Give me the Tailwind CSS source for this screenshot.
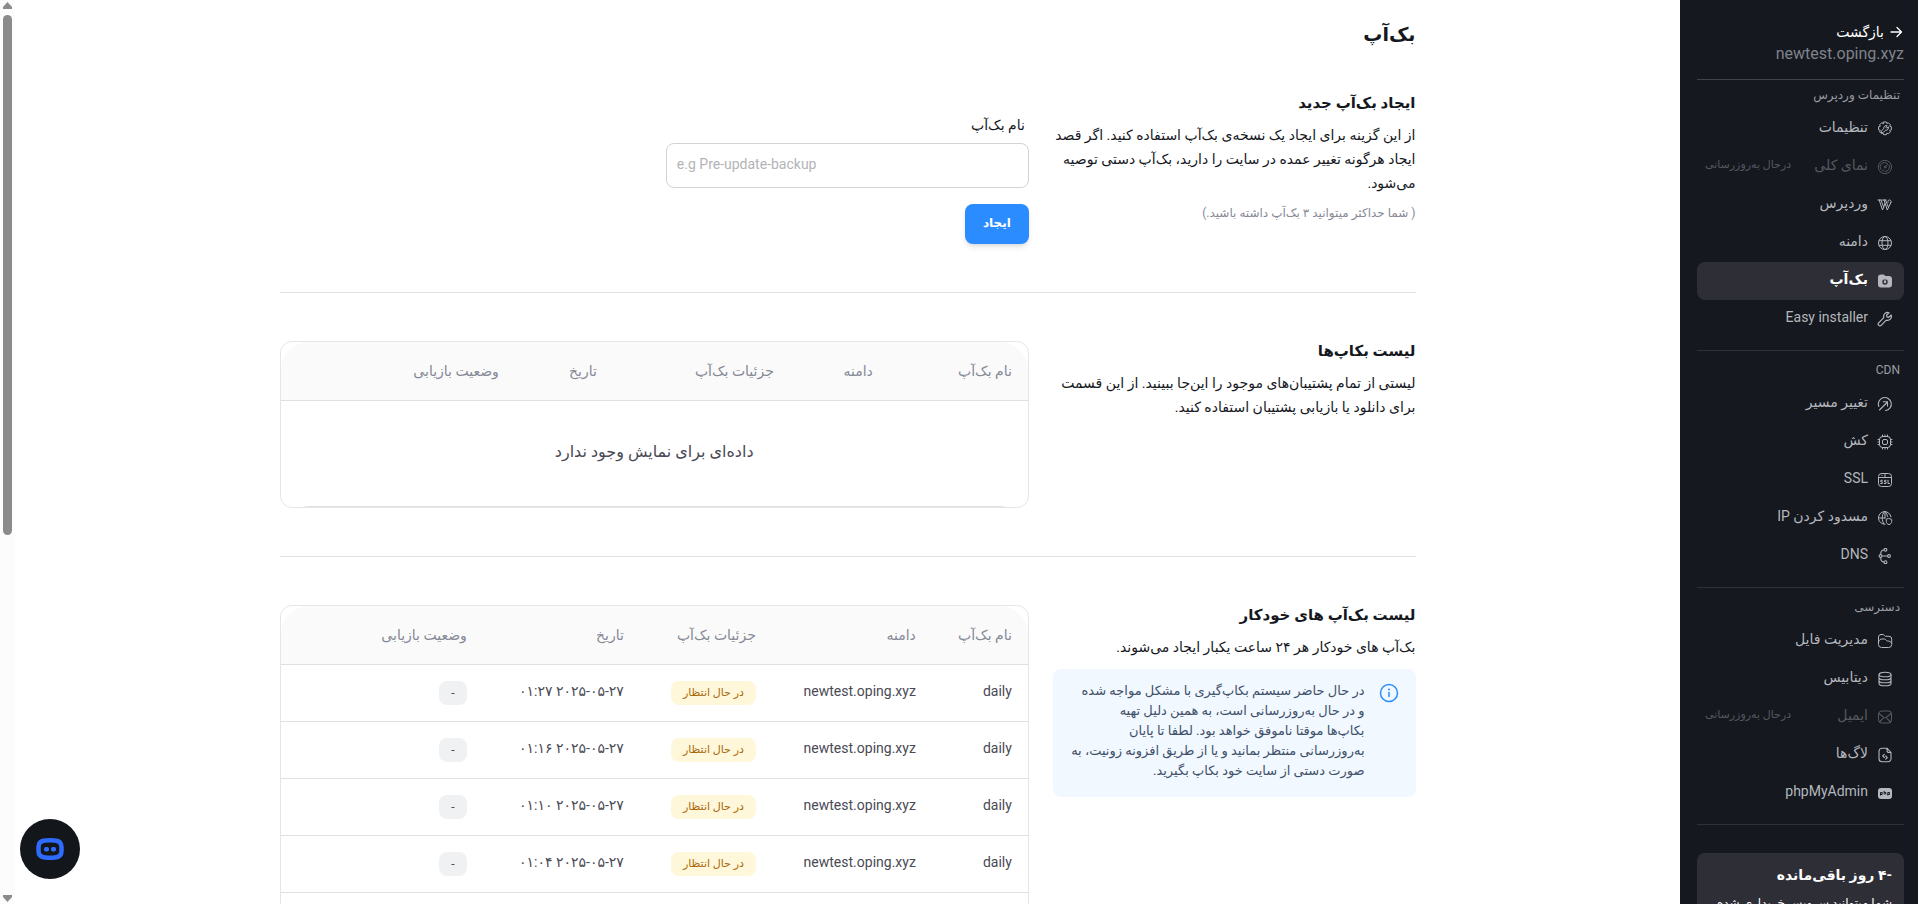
<!DOCTYPE html>
<html lang="fa" dir="rtl">
<head>
    <meta charset="UTF-8">
    <title>بک‌آپ</title>
    <meta name="viewport" content="width=device-width, initial-scale=1.0">
    <script src="https://cdn.jsdelivr.net/npm/@tailwindcss/browser@4"></script>
</head>
<body class="bg-white font-[Roboto,'DejaVu_Sans',sans-serif] text-[#15181e]">

<div class="flex h-screen overflow-hidden">

    <!-- sidebar -->
    <aside class="w-[238px] shrink-0 overflow-hidden bg-[#15181e] pr-[14px] pl-[17px] text-[#b4b7bd]">
        <div class="h-20 border-b border-[#3f4249] pt-5">
            <a href="#" class="flex h-6 items-center gap-1 text-sm font-medium text-white">
                <svg class="size-4" viewBox="0 0 16 16" fill="none" stroke="currentColor" stroke-width="1.3" stroke-linecap="round" stroke-linejoin="round"><path d="M3 8h10.5M9 3.5 13.5 8 9 12.5"/></svg>
                بازگشت
            </a>
            <p class="text-right text-base leading-5 text-[#7f838b]" dir="ltr">newtest.oping.xyz</p>
        </div>

        <nav>
            <h3 class="flex h-[30px] items-center pr-1 text-xs text-[#9a9da4]">تنظیمات وردپرس</h3>
            <ul class="text-sm [&_a]:pb-1 [&_svg]:mt-1">
                <li><a href="#" class="flex h-[38px] items-center gap-[9px] pr-[11px] pl-2">
                    <svg class="size-4" viewBox="0 0 16 16" fill="none" stroke="currentColor" stroke-linecap="round" stroke-linejoin="round"><path d="M6.600 1h2.800l.5 1.500 1.500-.7 2 2-.7 1.400 1.700.6v3l-1.700.5.7 1.500-2 2-1.500-.7-.5 1.600H6.600l-.5-1.600-1.500.7-2-2 .7-1.500-1.700-.5v-3l1.700-.6-.7-1.400 2-2 1.500.7z"/><path d="M4.600 11.400a1.200 1.200 0 0 1 0-1.700L6.800 7.500A2.500 2.500 0 0 1 10.100 4.700L8.800 6.200l1 1 1.500-1.400A2.500 2.500 0 0 1 8.500 9.200L6.300 11.400a1.200 1.200 0 0 1-1.700 0z"/></svg>
                    تنظیمات</a></li>
                <li><a href="#" class="flex h-[38px] items-center gap-[9px] pr-[11px] pl-2 text-[#55585e]">
                    <svg class="size-4" viewBox="0 0 16 16" fill="none" stroke="currentColor" stroke-linecap="round"><circle cx="8" cy="8" r="6.700"/><path d="M3.800 10.300a4.500 4.500 0 0 1 6.500-6M12.200 6a4.500 4.500 0 0 1-4 6.500M8.500 7.500l2-2M5.200 12l1.500-1"/><circle cx="8" cy="8" r="1"/></svg>
                    <span class="grow">نمای کلی</span><span class="text-[11px]">درحال به‌روزرسانی</span></a></li>
                <li><a href="#" class="flex h-[38px] items-center gap-[9px] pr-[11px] pl-2">
                    <svg class="size-4" viewBox="0 0 16 16" fill="none" stroke="currentColor" stroke-linecap="round" stroke-linejoin="round"><path d="M1 3h3M5.500 3h3.500M2.200 3l3.300 10L8 6.500M4 3l2.600 7M7 3l3.300 10 3.500-7.500M8.500 3l2.800 7M11 5.500c-1-2.500 2-3.500 3-1.500.500 1.200-.2 2-.8 3"/></svg>
                    وردپرس</a></li>
                <li><a href="#" class="flex h-[38px] items-center gap-[9px] pr-[11px] pl-2">
                    <svg class="size-4" viewBox="0 0 16 16" fill="none" stroke="currentColor"><circle cx="8" cy="8" r="6.500"/><ellipse cx="8" cy="8" rx="3" ry="6.500"/><path d="M2 5.700h12M2 10.300h12"/></svg>
                    دامنه</a></li>
                <li><a href="#" class="flex h-[38px] items-center gap-[9px] rounded-lg bg-[#2e2e37] pr-[11px] pl-2 font-bold text-white">
                    <svg class="size-4 text-[#b4b7bd]" viewBox="0 0 16 16" fill="none"><path fill="currentColor" d="M4 1.500h2.500c1 0 1.300 1.500 2.300 1.500H12a3 3 0 0 1 3 3v5.500a3 3 0 0 1-3 3H4a3 3 0 0 1-3-3v-7a3 3 0 0 1 3-3z"/><circle cx="8" cy="9" r="2" stroke="#2e2e37" stroke-width="1.400"/><path d="M8 6.500v2" stroke="#b4b7bd"/></svg>
                    بک‌آپ</a></li>
                <li><a href="#" class="flex h-[38px] items-center gap-[9px] pr-[11px] pl-2">
                    <svg class="size-4" viewBox="0 0 16 16" fill="none" stroke="currentColor" stroke-width="1.200" stroke-linecap="round" stroke-linejoin="round"><path d="M12 1.700a4 4 0 0 0-5.200 5L1.700 11.800a1.700 1.700 0 0 0 2.500 2.500l5-5.100a4 4 0 0 0 5-5.200L11.800 6.300 9.900 5.900 9.600 4z"/></svg>
                    Easy installer</a></li>
            </ul>

            <h3 class="mt-3 flex h-[35px] items-center border-t border-[#2f3138] pt-1 pr-1 text-xs text-[#9a9da4]">CDN</h3>
            <ul class="text-sm [&_a]:pb-1 [&_svg]:mt-1">
                <li><a href="#" class="flex h-[38px] items-center gap-[9px] pr-[11px] pl-2">
                    <svg class="size-4" viewBox="0 0 16 16" fill="none" stroke="currentColor" stroke-width="1.100" stroke-linecap="round" stroke-linejoin="round"><path d="M1.800 10.500A6.500 6.500 0 1 1 8.500 14.500M2.500 14l7.500-7.500M6.200 5.800h4.300v4.300"/></svg>
                    تغییر مسیر</a></li>
                <li><a href="#" class="flex h-[38px] items-center gap-[9px] pr-[11px] pl-2">
                    <svg class="size-4" viewBox="0 0 16 16" fill="none" stroke="currentColor" stroke-linecap="round"><rect x="2.500" y="2.500" width="11" height="11" rx="3"/><rect x="5.500" y="5.500" width="5" height="5" rx="1.500"/><path d="M5.500 2.500V1M8 2.500V1M10.500 2.500V1M5.500 15v-1.500M8 15v-1.500M10.500 15v-1.500M1 5.500h1.500M1 8h1.500M1 10.500h1.500M13.500 5.500H15M13.500 8H15M13.500 10.500H15"/></svg>
                    کش</a></li>
                <li><a href="#" class="flex h-[38px] items-center gap-[9px] pr-[11px] pl-2">
                    <svg class="size-4" viewBox="0 0 16 16" fill="none" stroke="currentColor" stroke-linecap="round"><rect x="1.500" y="1.500" width="13" height="13" rx="3"/><path d="M1.500 5.500h13M5 3.500h.1M8 2v3M5.300 8.300H3.800v1.500h1.500v1.700H3.700M9 8.300H7.500v1.500H9v1.700H7.400M11 8.300v3.200h1.500"/></svg>
                    SSL</a></li>
                <li><a href="#" class="flex h-[38px] items-center gap-[9px] pr-[11px] pl-2">
                    <svg class="size-4" viewBox="0 0 16 16" fill="none" stroke="currentColor" stroke-linecap="round" stroke-linejoin="round"><path d="M14 7A6.300 6.300 0 1 0 8 14.200M7.500 1.500c-3 3.500-3 9-.500 12.500M8 1.500c1.500 1.500 2.200 3 2.400 5M1.500 8H8M8 1.500V8"/><path d="m12 8.500 2.700 1v2c0 1.600-1.200 2.600-2.700 3.200-1.500-.6-2.700-1.600-2.700-3.200v-2z"/></svg>
                    مسدود کردن IP</a></li>
                <li><a href="#" class="flex h-[38px] items-center gap-[9px] pr-[11px] pl-2">
                    <svg class="size-4" viewBox="0 0 16 16" fill="none" stroke="currentColor" stroke-width="1.100"><circle cx="8.500" cy="1.800" r="1.400"/><circle cx="12" cy="8" r="1.400"/><circle cx="8.500" cy="14.200" r="1.400"/><circle cx="3.500" cy="8" r="1.400"/><path d="M7 1.900C4.800 2 3.700 3.500 3.700 6.500M5 8h5.500M3.700 9.500c0 3 1.100 4.500 3.300 4.600"/></svg>
                    DNS</a></li>
            </ul>

            <h3 class="mt-3 flex h-[35px] items-center border-t border-[#2f3138] pt-1 pr-1 text-xs text-[#9a9da4]">دسترسی</h3>
            <ul class="text-sm [&_a]:pb-1 [&_svg]:mt-1">
                <li><a href="#" class="flex h-[38px] items-center gap-[9px] pr-[11px] pl-2">
                    <svg class="size-4" viewBox="0 0 16 16" fill="none" stroke="currentColor" stroke-linecap="round" stroke-linejoin="round"><path d="M4 1.500h2c1.300 0 1.300 1.800 2.600 1.800H12a2.700 2.700 0 0 1 2.700 2.700v5.500a3 3 0 0 1-3 3H4.500a3 3 0 0 1-3-3V4A2.500 2.500 0 0 1 4 1.500z"/><path d="M1.500 9c1-2.500 2-3 3.500-3h2.500c1.500 0 1.500 2 3 2 2 0 3.200.5 4 2"/></svg>
                    مدیریت فایل</a></li>
                <li><a href="#" class="flex h-[38px] items-center gap-[9px] pr-[11px] pl-2">
                    <svg class="size-4" viewBox="0 0 16 16" fill="none" stroke="currentColor" stroke-width="1.100"><ellipse cx="8" cy="3.500" rx="6" ry="2.300"/><path d="M2 3.500v9c0 1.300 2.700 2.300 6 2.300s6-1 6-2.300v-9M2 6.500c0 1.300 2.700 2.300 6 2.300s6-1 6-2.300M2 9.500c0 1.300 2.700 2.300 6 2.300s6-1 6-2.300"/></svg>
                    دیتابیس</a></li>
                <li><a href="#" class="flex h-[38px] items-center gap-[9px] pr-[11px] pl-2 text-[#55585e]">
                    <svg class="size-4" viewBox="0 0 16 16" fill="none" stroke="currentColor" stroke-width="1.100" stroke-linecap="round" stroke-linejoin="round"><rect x="1.500" y="2" width="13" height="12" rx="3.500"/><path d="M2 4.500 7 8.500q1 .7 2 0l5-4M2.500 13l3.500-3.500M13.500 13 10 9.500"/></svg>
                    <span class="grow">ایمیل</span><span class="text-[11px]">درحال به‌روزرسانی</span></a></li>
                <li><a href="#" class="flex h-[38px] items-center gap-[9px] pr-[11px] pl-2">
                    <svg class="size-4" viewBox="0 0 16 16" fill="none" stroke="currentColor" stroke-width="1.100" stroke-linecap="round" stroke-linejoin="round"><path d="M5 1.200h5L14 5.500v6.300a3 3 0 0 1-3 3H5a3 3 0 0 1-3-3V4.200a3 3 0 0 1 3-3zM10 1.500v2a2 2 0 0 0 2 2h2M7.300 7.300 5.700 8.900l1.600 1.600M8.700 9l1.600 1.600-1.600 1.600"/></svg>
                    لاگ‌ها</a></li>
                <li><a href="#" class="flex h-[38px] items-center gap-[9px] pr-[11px] pl-2">
                    <svg class="size-4" viewBox="0 0 16 16" fill="none"><rect x="1" y="3" width="14" height="11" rx="3" fill="currentColor"/><path stroke="#15181e" d="M3.500 10.500v-3h1.700v2H3.500M7.200 6v3.500M7.200 7.500h1.600v2M10.800 10.500v-3h1.700v2h-1.700"/></svg>
                    phpMyAdmin</a></li>
            </ul>
        </nav>

        <div class="mt-3 border-t border-[#2f3138] pt-7">
            <div class="rounded-lg bg-[#2e2e37] px-3 pt-[10px] pb-3 text-white">
                <p class="text-sm leading-6 font-bold">-۴ روز باقی‌مانده</p>
                <p class="mt-1 text-xs leading-6 whitespace-nowrap">شما میتوانید سرویس خریداری شده</p>
            </div>
        </div>
    </aside>

    <!-- content -->
    <main class="min-w-0 grow overflow-hidden px-6">
        <div class="mx-auto max-w-[1136px] pt-5">
            <h1 class="text-[19px] leading-[30px] font-bold">بک‌آپ</h1>

            <section class="mt-[43px] grid grid-cols-3 gap-6 border-b border-[#dfe0e2] pb-12">
                <div>
                    <h2 class="text-[15px] leading-5 font-bold">ایجاد بک‌آپ جدید</h2>
                    <p class="mt-[10px] text-sm leading-6">از این گزینه برای ایجاد یک نسخه‌ی بک‌آپ استفاده کنید. اگر قصد ایجاد هرگونه تغییر عمده در سایت را دارید، بک‌آپ دستی توصیه می‌شود.</p>
                    <p class="mt-2 text-xs leading-5 text-[#868996]">( شما حداکثر میتوانید ۳ بک‌آپ داشته باشید.)</p>
                </div>
                <form class="col-span-2 pt-[22px]">
                    <label for="backup-name" class="block pr-1 text-sm leading-5">نام بک‌آپ</label>
                    <input id="backup-name" type="text" dir="ltr" placeholder="e.g Pre-update-backup" class="mt-2 block h-[45px] w-[363px] rounded-lg border border-[#d2d3d5] px-[10px] pb-1 text-sm placeholder:text-[#b3b4b6]">
                    <button type="button" class="mt-4 block h-10 w-16 rounded-lg bg-[#2b8cff] pb-[2px] text-xs font-bold text-white shadow-md">ایجاد</button>
                </form>
            </section>

            <section class="grid grid-cols-3 gap-6 border-b border-[#dfe0e2] py-12">
                <div>
                    <h2 class="text-[15px] leading-5 font-bold">لیست بکاپ‌ها</h2>
                    <p class="mt-[10px] text-sm leading-6">لیستی از تمام پشتیبان‌های موجود را این‌جا ببینید. از این قسمت برای دانلود یا بازیابی پشتیبان استفاده کنید.</p>
                </div>
                <div class="col-span-2 rounded-xl border border-[#e5e6e8]">
                    <div class="overflow-hidden rounded-[28px]">
                        <table class="w-full table-fixed border-separate border-spacing-0 text-right">
                            <thead class="bg-[#fafafa] text-sm text-[#868996]">
                            <tr>
                                <th class="h-[59px] w-[139px] border-b border-[#dfe0e2] px-4 font-medium">نام بک‌آپ</th>
                                <th class="w-[99px] border-b border-[#dfe0e2] px-4 font-medium">دامنه</th>
                                <th class="w-[177px] border-b border-[#dfe0e2] px-4 font-medium">جزئیات بک‌آپ</th>
                                <th class="w-[98px] border-b border-[#dfe0e2] px-4 font-medium">تاریخ</th>
                                <th class="border-b border-[#dfe0e2] px-4 font-medium">وضعیت بازیابی</th>
                            </tr>
                            </thead>
                            <tbody>
                            <tr>
                                <td colspan="5" class="h-[106px] border-b border-[#dfe0e2] pb-1 text-center text-base text-[#4a4a55]">داده‌ای برای نمایش وجود ندارد</td>
                            </tr>
                            </tbody>
                        </table>
                    </div>
                </div>
            </section>

            <section class="grid grid-cols-3 gap-6 py-12">
                <div>
                    <h2 class="text-[15px] leading-5 font-bold">لیست بک‌آپ های خودکار</h2>
                    <p class="mt-[10px] text-sm leading-6">بک‌آپ های خودکار هر ۲۴ ساعت یکبار ایجاد می‌شوند.</p>
                    <div class="mt-[10px] flex items-start gap-[14px] rounded-lg bg-[#f1f8ff] pt-3 pr-[17px] pb-4 pl-2">
                        <svg class="mt-[2px] size-5 shrink-0 text-[#2b8cff]" viewBox="0 0 20 20" fill="none" stroke="currentColor" stroke-width="1.500" stroke-linecap="round"><circle cx="10" cy="10" r="8.500"/><path d="M10 9.500v4"/><path d="M10 6.500v.1" stroke-width="2"/></svg>
                        <p class="text-[13px] leading-5 text-[#3f5069]">
                            در حال حاضر سیستم بکاپ‌گیری با مشکل مواجه شده<br>
                            و در حال به‌روزرسانی است، به همین دلیل تهیه<br>
                            بکاپ‌ها موقتا ناموفق خواهد بود. لطفا تا پایان<br>
                            به‌روزرسانی منتظر بمانید و یا از طریق افزونه زونیت، به<br>
                            صورت دستی از سایت خود بکاپ بگیرید.
                        </p>
                    </div>
                </div>
                <div class="col-span-2 rounded-xl border border-[#e5e6e8]">
                    <div class="overflow-hidden rounded-[28px]">
                        <table class="w-full table-fixed border-separate border-spacing-0 text-right">
                            <thead class="bg-[#fafafa] text-sm text-[#868996]">
                            <tr>
                                <th class="h-[59px] w-24 border-b border-[#dfe0e2] px-4 font-medium">نام بک‌آپ</th>
                                <th class="w-40 border-b border-[#dfe0e2] px-4 font-medium">دامنه</th>
                                <th class="w-33 border-b border-[#dfe0e2] px-4 font-medium">جزئیات بک‌آپ</th>
                                <th class="w-[157px] border-b border-[#dfe0e2] px-4 font-medium">تاریخ</th>
                                <th class="border-b border-[#dfe0e2] px-4 font-medium">وضعیت بازیابی</th>
                            </tr>
                            </thead>
                            <tbody id="auto_backups" class="text-sm whitespace-nowrap text-[#4a4a55]"></tbody>
                        </table>
                    </div>
                </div>
            </section>
        </div>
    </main>

    <!-- scroll track -->
    <div class="flex w-[15px] shrink-0 flex-col items-center bg-[#fcfcfc] py-[2px] text-[#8b8b8b]">
        <svg class="h-2 w-[9px]" viewBox="0 0 9 8" fill="currentColor"><path d="M4.500 0 9 5v2H0V5z"/></svg>
        <div class="mt-[5px] h-[520px] w-[9px] rounded-full bg-[#8b8b8b]"></div>
        <svg class="mt-auto h-2 w-[9px]" viewBox="0 0 9 8" fill="currentColor"><path d="M4.500 8 9 3V1H0v2z"/></svg>
    </div>
</div>

<button type="button" aria-label="گفتگو" class="fixed bottom-[25px] left-5 flex size-[60px] items-center justify-center rounded-full bg-[#13161b]">
    <svg class="h-6 w-7" viewBox="0 0 28 24" fill="none"><path stroke="#2f6bff" stroke-width="4.500" d="M9 3.500q5-.6 10 0 6.500.5 6.500 6.500v4q0 6-6.500 6.500-5 .6-10 0-6.500-.5-6.500-6.500v-4q0-6 6.500-6.500z"/><rect x="8" y="10" width="5" height="4.500" rx="1.800" fill="#2f6bff"/><rect x="15" y="10" width="5" height="4.500" rx="1.800" fill="#2f6bff"/></svg>
</button>

<script>
    const dates = ["۲۰۲۵-۰۵-۲۷ ۰۱:۲۷", "۲۰۲۵-۰۵-۲۷ ۰۱:۱۶", "۲۰۲۵-۰۵-۲۷ ۰۱:۱۰", "۲۰۲۵-۰۵-۲۷ ۰۱:۰۴", "۲۰۲۵-۰۵-۲۷ ۰۰:۵۸"]
    document.getElementById("auto_backups").innerHTML = dates.map((date) => `
        <tr>
            <td class="h-[57px] border-b border-[#dfe0e2] px-4 pb-1">daily</td>
            <td class="border-b border-[#dfe0e2] px-4 pb-1">newtest.oping.xyz</td>
            <td class="border-b border-[#dfe0e2] px-4"><span class="flex h-6 w-fit items-center rounded-lg bg-[#fff7d9] px-3 text-[11px] font-medium text-[#a8690c]">در حال انتظار</span></td>
            <td class="border-b border-[#dfe0e2] px-4 pb-1">${date}</td>
            <td class="border-b border-[#dfe0e2] px-4"><span class="flex h-6 w-7 items-center justify-center rounded-lg bg-[#eff1f3] text-xs">-</span></td>
        </tr>`).join("")
</script>
</body>
</html>
